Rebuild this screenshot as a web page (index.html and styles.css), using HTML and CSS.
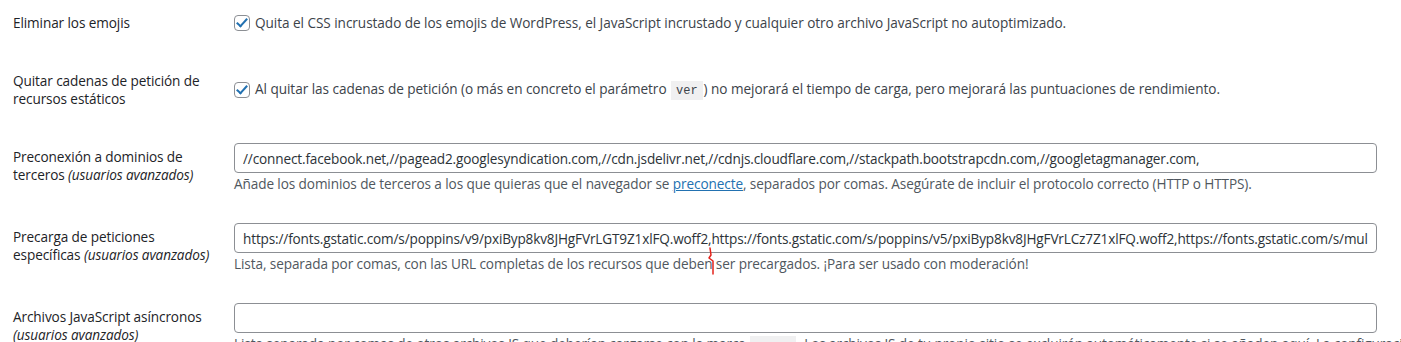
FILE: index.html
```html
<!DOCTYPE html>
<html lang="es">
<head>
  <meta charset="UTF-8">
  <meta name="viewport" content="width=device-width, initial-scale=1.0">
  <title>Ajustes adicionales</title>
  <link rel="stylesheet" href="styles.css">
</head>
<body>
  <div class="wrap">
    <table class="form-table">
      <tr class="check-row">
        <th>Eliminar los emojis</th>
        <td>
          <label class="check"><input type="checkbox" checked> Quita el CSS incrustado de los emojis de WordPress, el JavaScript incrustado y cualquier otro archivo JavaScript no autoptimizado.</label>
        </td>
      </tr>
      <tr class="check-row">
        <th>Quitar cadenas de petición de recursos estáticos</th>
        <td>
          <label class="check"><input type="checkbox" checked> <span>Al quitar las cadenas de petición (o más en concreto el parámetro <code>ver</code>) no mejorará el tiempo de carga, pero mejorará las puntuaciones de rendimiento.</span></label>
        </td>
      </tr>
      <tr>
        <th>Preconexión a dominios de terceros <em>(usuarios avanzados)</em></th>
        <td>
          <input type="text" class="text-field" value="//connect.facebook.net,//pagead2.googlesyndication.com,//cdn.jsdelivr.net,//cdnjs.cloudflare.com,//stackpath.bootstrapcdn.com,//googletagmanager.com,">
          <p class="description">Añade los dominios de terceros a los que quieras que el navegador se <a href="#">preconecte</a>, separados por comas. Asegúrate de incluir el protocolo correcto (HTTP o HTTPS).</p>
        </td>
      </tr>
      <tr>
        <th>Precarga de peticiones específicas <em>(usuarios avanzados)</em></th>
        <td>
          <input type="text" class="text-field" value="https://fonts.gstatic.com/s/poppins/v9/pxiByp8kv8JHgFVrLGT9Z1xlFQ.woff2,https://fonts.gstatic.com/s/poppins/v5/pxiByp8kv8JHgFVrLCz7Z1xlFQ.woff2,https://fonts.gstatic.com/s/muli/v22/7Auwp_0qiz-afTLGLQ.woff2">
          <p class="description">Lista, separada por comas, con las URL completas de los recursos que deben ser precargados. ¡Para ser usado con moderación!</p>
        </td>
      </tr>
      <tr>
        <th>Archivos JavaScript asíncronos <em>(usuarios avanzados)</em></th>
        <td>
          <input type="text" class="text-field" value="">
          <p class="description nowrap">Lista separada por comas de otros archivos JS que deberían cargarse con la marca <code>async</code>. Los archivos JS de tu propio sitio se excluirán automáticamente si se añaden aquí. La configuración</p>
        </td>
      </tr>
    </table>

    <!-- red pen mark on the screenshot -->
    <svg class="pen-mark" width="10" height="28" viewBox="0 0 10 28">
      <path d="M3 1 L4 8 L2 11 L6 14 L6 27" fill="none" stroke="#e3231c" stroke-width="1.5" stroke-linecap="round" stroke-linejoin="round"/>
    </svg>
  </div>
</body>
</html>
```

FILE: styles.css
```css
html,
body {
  margin: 0;
  overflow: hidden;
}

body {
  font-family: "Open Sans", "Noto Sans", sans-serif;
  font-size: 13.6px;
  letter-spacing: -0.1px;
  color: #3c434a;
  background: #fff;
}

.wrap {
  position: relative;
  padding: 0 14px 0 13px;
  margin-top: -6px;
}

.form-table {
  width: 100%;
  table-layout: fixed;
  border-collapse: collapse;
}

.form-table th {
  width: 205px;
  padding: 20px 6px 20px 0;
  text-align: left;
  vertical-align: top;
  font-weight: normal;
  line-height: 18px;
  color: #1d2327;
}

.form-table th em {
  font-style: italic;
}

.form-table td {
  padding: 15px 10px;
  vertical-align: top;
  line-height: 18px;
}

.form-table .check-row td {
  vertical-align: middle;
}

.check {
  display: flex;
  align-items: center;
  gap: 5px;
}

.check span,
.check {
  letter-spacing: -0.05px;
}

.check input[type="checkbox"] {
  appearance: none;
  width: 16px;
  height: 16px;
  margin: 0;
  border: 1px solid #8c8f94;
  border-radius: 4px;
  background: #fff;
  position: relative;
  flex: none;
}

.check input[type="checkbox"]:checked::after {
  content: "";
  position: absolute;
  left: 4px;
  top: 0px;
  width: 4px;
  height: 9px;
  border: solid #2271b1;
  border-width: 0 2.5px 2.5px 0;
  transform: rotate(42deg);
}

code {
  font-family: "Liberation Mono", "DejaVu Sans Mono", monospace;
  font-size: 12px;
  letter-spacing: 0;
  background: #f0f0f1;
  padding: 3px 5px 2px;
  margin: 0 1px;
  color: #3c434a;
}

.text-field {
  display: block;
  box-sizing: border-box;
  width: 100%;
  height: 30px;
  margin: 0;
  padding: 0 8px;
  font-family: inherit;
  font-size: 13.6px;
  letter-spacing: -0.15px;
  color: #2c3338;
  border: 1px solid #8c8f94;
  border-radius: 4px;
  background: #fff;
}

.description {
  margin: 2px 0 0;
  line-height: 18px;
  color: #50575e;
}

.description a {
  color: #2271b1;
}

.nowrap {
  white-space: nowrap;
}

.pen-mark {
  position: absolute;
  left: 707px;
  top: 253px;
}
```
